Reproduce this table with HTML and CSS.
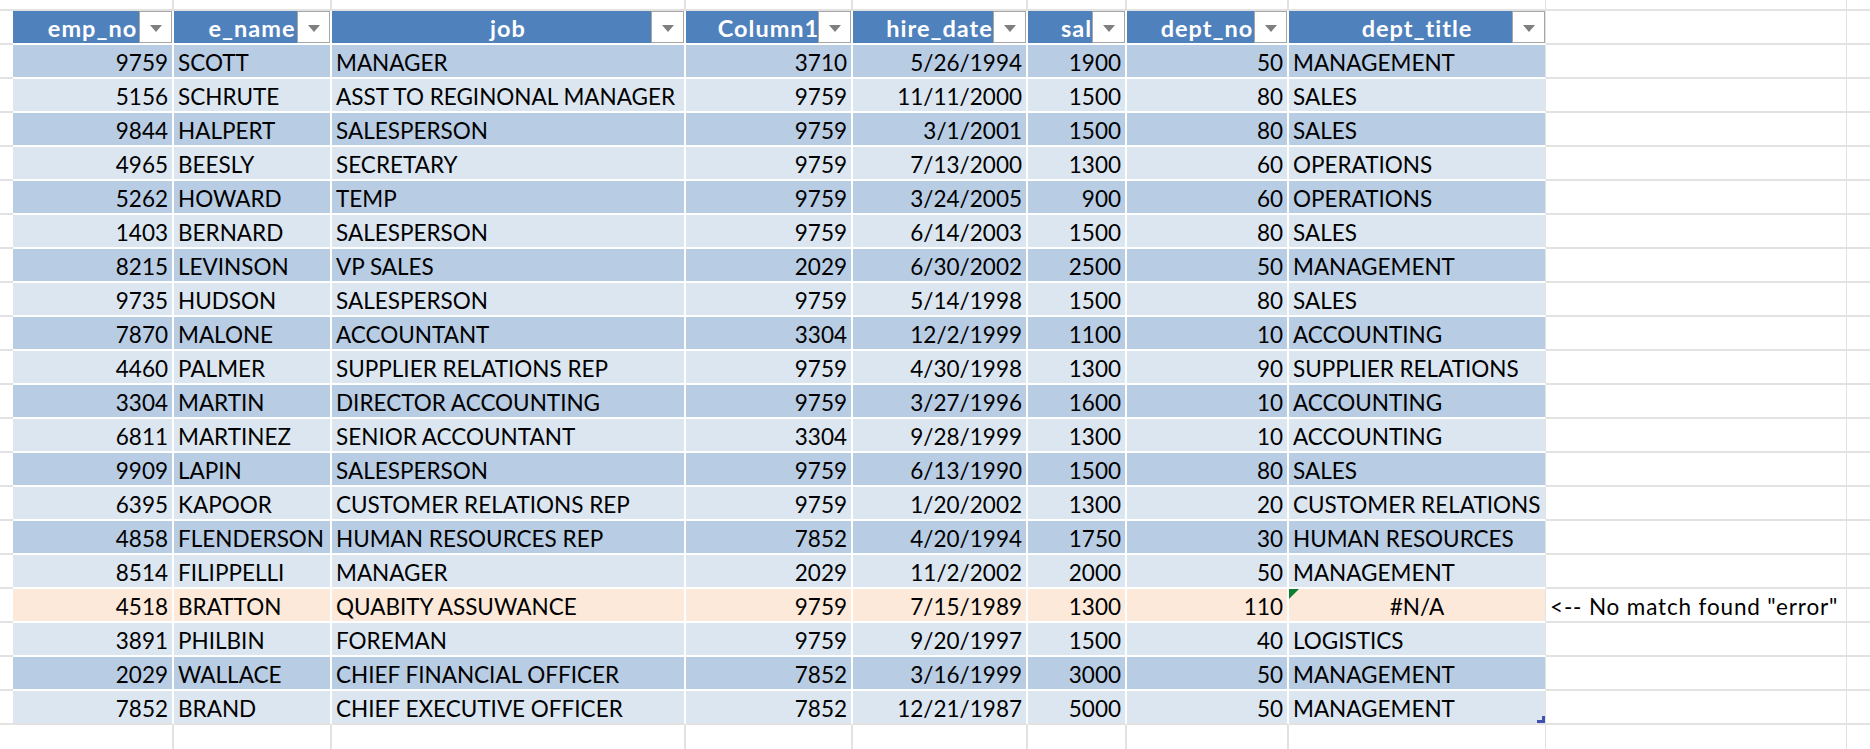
FILE: index.html
```html
<!DOCTYPE html>
<html>
<head>
<meta charset="utf-8">
<link rel="stylesheet" href="styles.css">
</head>
<body>
<div class="sheet">
  <div class="row top">
    <div class="c a"></div><div class="c"></div><div class="c"></div><div class="c"></div><div class="c"></div><div class="c"></div><div class="c"></div><div class="c"></div><div class="c last"></div><div class="c j"></div><div class="c k"></div>
  </div>
  <div class="row head">
    <div class="c a"></div>
    <div class="c h">emp_no<span class="fbtn"><i></i></span></div>
    <div class="c h">e_name<span class="fbtn"><i></i></span></div>
    <div class="c h">job<span class="fbtn"><i></i></span></div>
    <div class="c h">Column1<span class="fbtn"><i></i></span></div>
    <div class="c h">hire_date<span class="fbtn"><i></i></span></div>
    <div class="c h">sal<span class="fbtn"><i></i></span></div>
    <div class="c h">dept_no<span class="fbtn"><i></i></span></div>
    <div class="c h last">dept_title<span class="fbtn"><i></i></span></div>
    <div class="c j"></div><div class="c k"></div>
  </div>

  <div class="row dark"><div class="c a"></div><div class="c n">9759</div><div class="c t">SCOTT</div><div class="c t">MANAGER</div><div class="c n">3710</div><div class="c n">5/26/1994</div><div class="c n">1900</div><div class="c n">50</div><div class="c t last">MANAGEMENT</div><div class="c j"></div><div class="c k"></div></div>
  <div class="row light"><div class="c a"></div><div class="c n">5156</div><div class="c t">SCHRUTE</div><div class="c t">ASST TO REGINONAL MANAGER</div><div class="c n">9759</div><div class="c n">11/11/2000</div><div class="c n">1500</div><div class="c n">80</div><div class="c t last">SALES</div><div class="c j"></div><div class="c k"></div></div>
  <div class="row dark"><div class="c a"></div><div class="c n">9844</div><div class="c t">HALPERT</div><div class="c t">SALESPERSON</div><div class="c n">9759</div><div class="c n">3/1/2001</div><div class="c n">1500</div><div class="c n">80</div><div class="c t last">SALES</div><div class="c j"></div><div class="c k"></div></div>
  <div class="row light"><div class="c a"></div><div class="c n">4965</div><div class="c t">BEESLY</div><div class="c t">SECRETARY</div><div class="c n">9759</div><div class="c n">7/13/2000</div><div class="c n">1300</div><div class="c n">60</div><div class="c t last">OPERATIONS</div><div class="c j"></div><div class="c k"></div></div>
  <div class="row dark"><div class="c a"></div><div class="c n">5262</div><div class="c t">HOWARD</div><div class="c t">TEMP</div><div class="c n">9759</div><div class="c n">3/24/2005</div><div class="c n">900</div><div class="c n">60</div><div class="c t last">OPERATIONS</div><div class="c j"></div><div class="c k"></div></div>
  <div class="row light"><div class="c a"></div><div class="c n">1403</div><div class="c t">BERNARD</div><div class="c t">SALESPERSON</div><div class="c n">9759</div><div class="c n">6/14/2003</div><div class="c n">1500</div><div class="c n">80</div><div class="c t last">SALES</div><div class="c j"></div><div class="c k"></div></div>
  <div class="row dark"><div class="c a"></div><div class="c n">8215</div><div class="c t">LEVINSON</div><div class="c t">VP SALES</div><div class="c n">2029</div><div class="c n">6/30/2002</div><div class="c n">2500</div><div class="c n">50</div><div class="c t last">MANAGEMENT</div><div class="c j"></div><div class="c k"></div></div>
  <div class="row light"><div class="c a"></div><div class="c n">9735</div><div class="c t">HUDSON</div><div class="c t">SALESPERSON</div><div class="c n">9759</div><div class="c n">5/14/1998</div><div class="c n">1500</div><div class="c n">80</div><div class="c t last">SALES</div><div class="c j"></div><div class="c k"></div></div>
  <div class="row dark"><div class="c a"></div><div class="c n">7870</div><div class="c t">MALONE</div><div class="c t">ACCOUNTANT</div><div class="c n">3304</div><div class="c n">12/2/1999</div><div class="c n">1100</div><div class="c n">10</div><div class="c t last">ACCOUNTING</div><div class="c j"></div><div class="c k"></div></div>
  <div class="row light"><div class="c a"></div><div class="c n">4460</div><div class="c t">PALMER</div><div class="c t">SUPPLIER RELATIONS REP</div><div class="c n">9759</div><div class="c n">4/30/1998</div><div class="c n">1300</div><div class="c n">90</div><div class="c t last">SUPPLIER RELATIONS</div><div class="c j"></div><div class="c k"></div></div>
  <div class="row dark"><div class="c a"></div><div class="c n">3304</div><div class="c t">MARTIN</div><div class="c t">DIRECTOR ACCOUNTING</div><div class="c n">9759</div><div class="c n">3/27/1996</div><div class="c n">1600</div><div class="c n">10</div><div class="c t last">ACCOUNTING</div><div class="c j"></div><div class="c k"></div></div>
  <div class="row light"><div class="c a"></div><div class="c n">6811</div><div class="c t">MARTINEZ</div><div class="c t">SENIOR ACCOUNTANT</div><div class="c n">3304</div><div class="c n">9/28/1999</div><div class="c n">1300</div><div class="c n">10</div><div class="c t last">ACCOUNTING</div><div class="c j"></div><div class="c k"></div></div>
  <div class="row dark"><div class="c a"></div><div class="c n">9909</div><div class="c t">LAPIN</div><div class="c t">SALESPERSON</div><div class="c n">9759</div><div class="c n">6/13/1990</div><div class="c n">1500</div><div class="c n">80</div><div class="c t last">SALES</div><div class="c j"></div><div class="c k"></div></div>
  <div class="row light"><div class="c a"></div><div class="c n">6395</div><div class="c t">KAPOOR</div><div class="c t">CUSTOMER RELATIONS REP</div><div class="c n">9759</div><div class="c n">1/20/2002</div><div class="c n">1300</div><div class="c n">20</div><div class="c t last">CUSTOMER RELATIONS</div><div class="c j"></div><div class="c k"></div></div>
  <div class="row dark"><div class="c a"></div><div class="c n">4858</div><div class="c t">FLENDERSON</div><div class="c t">HUMAN RESOURCES REP</div><div class="c n">7852</div><div class="c n">4/20/1994</div><div class="c n">1750</div><div class="c n">30</div><div class="c t last">HUMAN RESOURCES</div><div class="c j"></div><div class="c k"></div></div>
  <div class="row light"><div class="c a"></div><div class="c n">8514</div><div class="c t">FILIPPELLI</div><div class="c t">MANAGER</div><div class="c n">2029</div><div class="c n">11/2/2002</div><div class="c n">2000</div><div class="c n">50</div><div class="c t last">MANAGEMENT</div><div class="c j"></div><div class="c k"></div></div>
  <div class="row peach"><div class="c a"></div><div class="c n">4518</div><div class="c t">BRATTON</div><div class="c t">QUABITY ASSUWANCE</div><div class="c n">9759</div><div class="c n">7/15/1989</div><div class="c n">1300</div><div class="c n">110</div><div class="c m last">#N/A<span class="errmark"></span></div><div class="c j note">&lt;-- No match found "error"</div><div class="c k"></div></div>
  <div class="row light"><div class="c a"></div><div class="c n">3891</div><div class="c t">PHILBIN</div><div class="c t">FOREMAN</div><div class="c n">9759</div><div class="c n">9/20/1997</div><div class="c n">1500</div><div class="c n">40</div><div class="c t last">LOGISTICS</div><div class="c j"></div><div class="c k"></div></div>
  <div class="row dark"><div class="c a"></div><div class="c n">2029</div><div class="c t">WALLACE</div><div class="c t">CHIEF FINANCIAL OFFICER</div><div class="c n">7852</div><div class="c n">3/16/1999</div><div class="c n">3000</div><div class="c n">50</div><div class="c t last">MANAGEMENT</div><div class="c j"></div><div class="c k"></div></div>
  <div class="row light end"><div class="c a"></div><div class="c n">7852</div><div class="c t">BRAND</div><div class="c t">CHIEF EXECUTIVE OFFICER</div><div class="c n">7852</div><div class="c n">12/21/1987</div><div class="c n">5000</div><div class="c n">50</div><div class="c t last">MANAGEMENT<svg class="handle" width="8" height="7" viewBox="0 0 8 7"><polygon points="5,0 8,0 8,7 0,7 0,4 5,4" fill="#3F51B5"/></svg></div><div class="c j"></div><div class="c k"></div></div>

  <div class="row tail">
    <div class="c a"></div><div class="c"></div><div class="c"></div><div class="c"></div><div class="c"></div><div class="c"></div><div class="c"></div><div class="c"></div><div class="c last"></div><div class="c j"></div><div class="c k"></div>
  </div>
</div>
</body>
</html>
```

FILE: styles.css
```css
html, body {
  margin: 0;
  padding: 0;
  background: #ffffff;
}

body {
  font-family: Lato, "Liberation Sans", sans-serif;
  font-size: 22.5px;
  color: #000000;
}

.sheet {
  width: 1870px;
  height: 749px;
  overflow: hidden;
}

.row {
  display: grid;
  grid-template-columns: 13px 161px 158px 354px 167px 175px 99px 162px 257px 301px 1fr;
  height: 34px;
}

.row.top {
  height: 11px;
}

.row.tail {
  height: 40px;
}

.c {
  box-sizing: border-box;
  display: flex;
  align-items: center;
  padding: 3px 4px 0 4px;
  white-space: nowrap;
  overflow: hidden;
  border-right: 2px solid #ffffff;
  border-bottom: 2px solid #ffffff;
  position: relative;
}

.c.a {
  border-right: none;
  border-bottom-color: #e2e2e2;
  background: #ffffff;
}

.c.last {
  border-right: 1px solid #e2e2e2;
}

.c.j {
  border-right: 1px solid #e2e2e2;
  border-bottom-color: #e2e2e2;
  background: #ffffff;
}

.c.k {
  border-right: none;
  border-bottom-color: #e2e2e2;
  background: #ffffff;
}

.row.top .c,
.row.tail .c {
  border-color: #e2e2e2;
  background: #ffffff;
}

.row.top .c.a,
.row.tail .c.a {
  border-right: none;
}

.row.end .c {
  border-bottom-color: #e2e2e2;
}

.n {
  justify-content: flex-end;
}

.t {
  justify-content: flex-start;
}

.m {
  justify-content: center;
}

.dark .c:not(.a):not(.j):not(.k) {
  background: #b8cce4;
}

.light .c:not(.a):not(.j):not(.k) {
  background: #dce6f1;
}

.peach .c:not(.a):not(.j):not(.k) {
  background: #fde9d9;
}

.c.h {
  background: #4f81bd;
  color: #ffffff;
  font-weight: 700;
  font-size: 23.5px;
  letter-spacing: 1px;
  justify-content: center;
  padding: 1px 4px 0 4px;
}

.fbtn {
  position: absolute;
  right: 0;
  top: 0;
  width: 33px;
  height: 32px;
  box-sizing: border-box;
  background: #ffffff;
  border: 1px solid #a6a6a6;
  display: flex;
  align-items: center;
  justify-content: center;
}

.fbtn i {
  display: block;
  width: 0;
  height: 0;
  margin-top: 2px;
  border-left: 6px solid transparent;
  border-right: 6px solid transparent;
  border-top: 7px solid #7f7f7f;
}

.errmark {
  position: absolute;
  left: 0;
  top: 0;
  width: 0;
  height: 0;
  border-top: 10px solid #107c2e;
  border-right: 10px solid transparent;
}

.handle {
  position: absolute;
  right: 0;
  bottom: 0;
  display: block;
}

.note {
  justify-content: flex-start;
  letter-spacing: 0.85px;
}
```
